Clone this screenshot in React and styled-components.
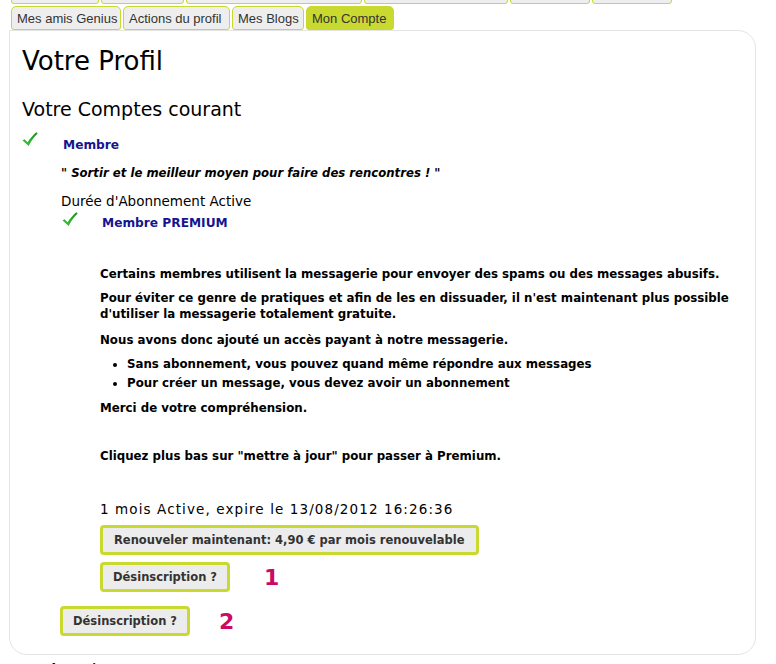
import React from "react";
import styled, { createGlobalStyle } from "styled-components";

const GlobalStyle = createGlobalStyle`
  body {
    margin: 0;
    background: #fff;
    font-family: "DejaVu Sans", Verdana, sans-serif;
    color: #000;
  }
`;

const LIME = "#c9d92f";

const Page = styled.div`
  width: 776px;
  height: 664px;
  overflow: hidden;
  padding: 0 20px 0 9px;
  box-sizing: border-box;
`;

const TabRow = styled.div`
  display: flex;
  gap: 2px;
  padding-left: 2px;
  margin-top: ${(p) => (p.$top ? "-20px" : "2px")};
  height: 24px;
`;

const Tab = styled.div`
  box-sizing: border-box;
  width: ${(p) => (p.$w ? `${p.$w}px` : "auto")};
  height: 24px;
  padding: 0 5px;
  display: flex;
  align-items: center;
  font-family: "Liberation Sans", Arial, sans-serif;
  font-size: 13px;
  color: #333;
  background: ${(p) => (p.$active ? LIME : "#eeeeee")};
  border: 1px solid ${LIME};
  border-radius: 5px 5px 3px 3px;
  white-space: nowrap;
`;

const Panel = styled.div`
  box-sizing: border-box;
  height: 625px;
  border: 1px solid #e4e4e4;
  border-radius: 0 18px 18px 18px;
  padding: 14px 12px 0 12px;
`;

const Title = styled.h1`
  margin: 0;
  font-size: 26px;
  font-weight: normal;
  line-height: 32px;
`;

const Subtitle = styled.h2`
  margin: 20px 0 0;
  font-size: 19px;
  font-weight: normal;
  line-height: 24px;
`;

const CheckRow = styled.div`
  display: flex;
  align-items: flex-start;
  margin-left: ${(p) => p.$indent || 0}px;
  margin-top: ${(p) => p.$top || 0}px;
`;

const CheckLabel = styled.span`
  font-size: 12.2px;
  font-weight: bold;
  line-height: 16px;
  color: #15158f;
  margin-left: ${(p) => p.$gap}px;
  padding-top: ${(p) => p.$pt}px;
`;

const Indent = styled.div`
  margin-left: ${(p) => p.$left}px;
  margin-top: ${(p) => p.$top || 0}px;
`;

const Quote = styled.p`
  margin: 12px 0 0;
  font-size: 11.7px;
  font-weight: bold;
  font-style: italic;
  line-height: 16px;
`;

const Plain = styled.p`
  margin: ${(p) => p.$top || 0}px 0 0;
  font-size: 13.5px;
  letter-spacing: ${(p) => p.$spacing || 0}px;
  line-height: 16px;
`;

const Strong = styled.p`
  margin: ${(p) => p.$top || 0}px 0 0;
  font-size: 11.8px;
  font-weight: bold;
  line-height: 16px;
`;

const List = styled.ul`
  margin: 7px 0 0;
  padding-left: 27px;
  font-size: 11.8px;
  font-weight: bold;
  line-height: 19px;
`;

const ButtonRow = styled.div`
  display: flex;
  align-items: center;
  gap: ${(p) => p.$gap || 0}px;
  margin-top: ${(p) => p.$top || 0}px;
  margin-left: ${(p) => p.$left || 0}px;
`;

const Button = styled.button`
  box-sizing: border-box;
  height: 30px;
  padding: 0 ${(p) => p.$pad || 11}px;
  background: #ececec;
  border: 3px solid ${LIME};
  border-radius: 4px;
  font-family: inherit;
  font-size: 11.5px;
  font-weight: bold;
  color: #333;
`;

const Num = styled.span`
  font-size: 22px;
  font-weight: bold;
  color: #cc0a66;
`;

const Footer = styled.div`
  margin-top: 6px;
  padding-left: 3px;
  font-size: 13px;
  font-weight: bold;
`;

const CheckSvg = styled.svg`
  flex: none;
  margin-top: ${(p) => p.$top || 0}px;
`;

function Check({ id, top }) {
  return (
    <CheckSvg width="16" height="16" viewBox="0 0 16 16" $top={top}>
      <defs>
        <linearGradient id={id} x1="0" y1="1" x2="1" y2="0">
          <stop offset="0" stopColor="#3fd03f" />
          <stop offset="1" stopColor="#148a14" />
        </linearGradient>
      </defs>
      <path
        d="M0.5 9.6 L2.6 8.3 L5.6 11.2 C8 7.5 11 4 14.2 1.2 L15.6 2.4 C12 6 9 10 6.6 15 Z"
        fill={`url(#${id})`}
      />
    </CheckSvg>
  );
}

export default function App() {
  return (
    <Page>
      <GlobalStyle />
      <TabRow $top>
        <Tab $w={88} />
        <Tab $w={83} />
        <Tab $w={176} />
        <Tab $w={144} />
        <Tab $w={80} />
        <Tab $w={80} />
      </TabRow>
      <TabRow>
        <Tab $w={110}>Mes amis Genius</Tab>
        <Tab $w={107}>Actions du profil</Tab>
        <Tab $w={72}>Mes Blogs</Tab>
        <Tab $w={88} $active>
          Mon Compte
        </Tab>
      </TabRow>
      <Panel>
        <Title>Votre Profil</Title>
        <Subtitle>Votre Comptes courant</Subtitle>
        <CheckRow $top={10}>
          <Check id="chk1" />
          <CheckLabel $gap={25} $pt={6}>Membre</CheckLabel>
        </CheckRow>
        <Indent $left={39}>
          <Quote>" Sortir et le meilleur moyen pour faire des rencontres ! "</Quote>
          <Plain $top={12}>Durée d'Abonnement Active</Plain>
          <CheckRow $top={2} $indent={1}>
            <Check id="chk2" />
            <CheckLabel $gap={24} $pt={4}>Membre PREMIUM</CheckLabel>
          </CheckRow>
          <Indent $left={39} $top={35}>
            <Strong>
              Certains membres utilisent la messagerie pour envoyer des spams ou des messages abusifs.
            </Strong>
            <Strong $top={8}>
              Pour éviter ce genre de pratiques et afin de les en dissuader, il n'est maintenant plus possible
              <br />
              d'utiliser la messagerie totalement gratuite.
            </Strong>
            <Strong $top={10}>Nous avons donc ajouté un accès payant à notre messagerie.</Strong>
            <List>
              <li>Sans abonnement, vous pouvez quand même répondre aux messages</li>
              <li>Pour créer un message, vous devez avoir un abonnement</li>
            </List>
            <Strong $top={7}>Merci de votre compréhension.</Strong>
            <Strong $top={32}>Cliquez plus bas sur "mettre à jour" pour passer à Premium.</Strong>
            <Plain $top={37} $spacing={1.1}>
              1 mois Active, expire le 13/08/2012 16:26:36
            </Plain>
            <ButtonRow $top={8}>
              <Button>Renouveler maintenant: 4,90 € par mois renouvelable</Button>
            </ButtonRow>
            <ButtonRow $top={7} $gap={34}>
              <Button $pad={10}>Désinscription ?</Button>
              <Num>1</Num>
            </ButtonRow>
          </Indent>
        </Indent>
        <ButtonRow $top={14} $left={38} $gap={29}>
          <Button $pad={10}>Désinscription ?</Button>
          <Num>2</Num>
        </ButtonRow>
      </Panel>
      <Footer>Les Abonnés</Footer>
    </Page>
  );
}
